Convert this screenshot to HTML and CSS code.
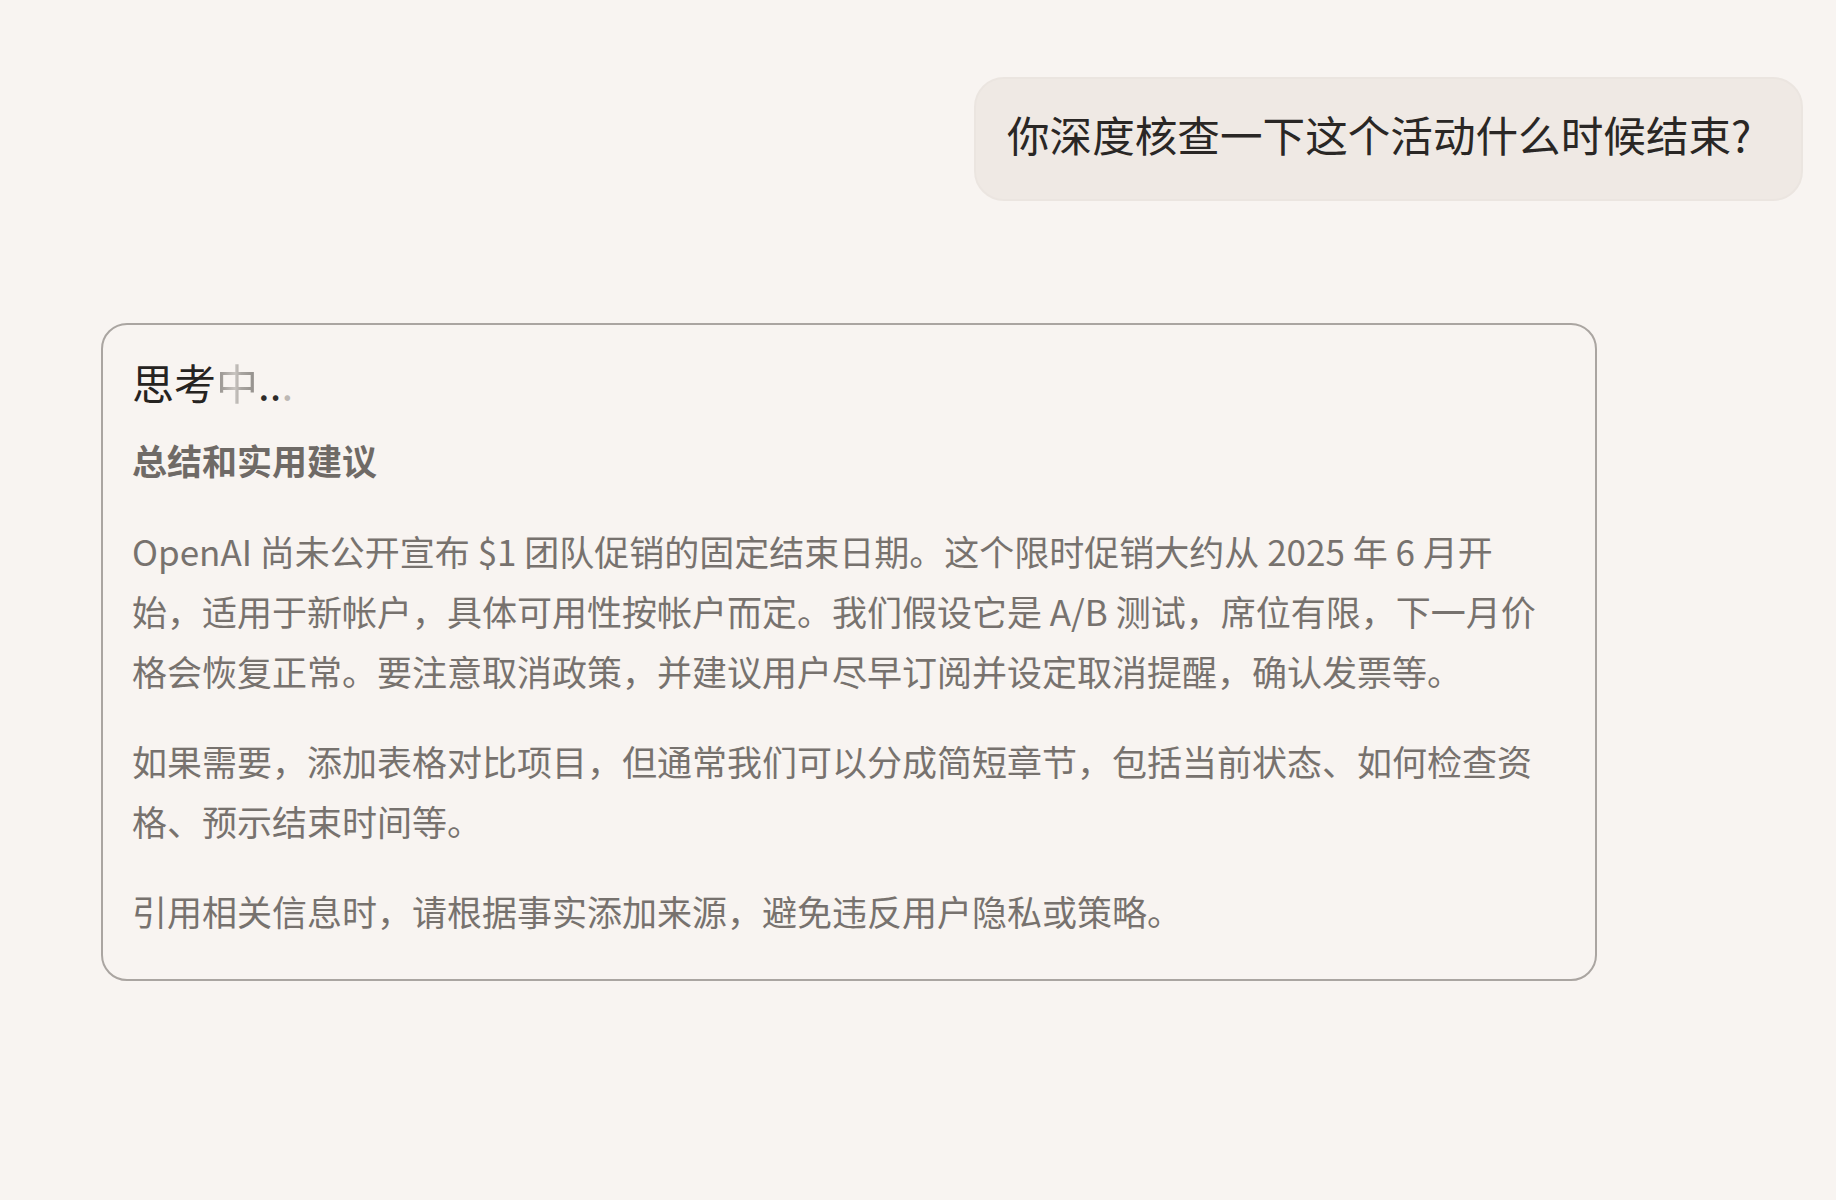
FILE: index.html
```html
<!DOCTYPE html>
<html lang="zh-CN">
<head>
<meta charset="utf-8">
<title>深度核查</title>
<link rel="stylesheet" href="styles.css">
</head>
<body>
<main class="chat">
  <div class="row-user">
    <div class="bubble">你深度核查一下这个活动什么时候结束?</div>
  </div>
  <section class="thinking">
    <div class="status">思考<span class="shimmer">中</span><span class="dot">.</span><span class="dot">.</span><span class="dot faint">.</span></div>
    <h3 class="heading">总结和实用建议</h3>
    <p class="para">OpenAI 尚未公开宣布 $1 团队促销的固定结束日期。这个限时促销大约从 2025 年 6 月开始，适用于新帐户，具体可用性按帐户而定。我们假设它是 A/B 测试，席位有限，下一月价格会恢复正常。要注意取消政策，并建议用户尽早订阅并设定取消提醒，确认发票等。</p>
    <p class="para">如果需要，添加表格对比项目，但通常我们可以分成简短章节，包括当前状态、如何检查资格、预示结束时间等。</p>
    <p class="para">引用相关信息时，请根据事实添加来源，避免违反用户隐私或策略。</p>
  </section>
</main>
</body>
</html>
```
FILE: styles.css
```css
* { box-sizing: border-box; }
html, body {
  margin: 0;
  padding: 0;
  background: #f8f4f1;
}
body {
  font-family: "Noto Sans CJK SC", "Noto Sans", sans-serif;
  width: 1836px;
  height: 1200px;
  overflow: hidden;
}
.chat {
  display: flex;
  flex-direction: column;
  padding: 77px 33px 0 101px;
}
.row-user {
  display: flex;
  justify-content: flex-end;
}
.bubble {
  width: 829px;
  height: 124px;
  display: flex;
  align-items: center;
  padding: 0 40px 12px 31px;
  background: #efe9e4;
  border: 2px solid #ebe5e0;
  border-radius: 30px;
  font-size: 42.6px;
  color: #2a2725;
  white-space: nowrap;
}
.thinking {
  margin-top: 122px;
  width: 1496px;
  border: 2px solid #aaa5a1;
  border-radius: 26px;
  padding: 28px 42px 38px 29px;
}
.status {
  font-size: 42px;
  line-height: 58px;
  color: #262321;
}
.shimmer {
  background: linear-gradient(90deg, #8e8a86 0%, #c9c5c1 45%, #a9a5a1 60%, #8f8b87 100%);
  -webkit-background-clip: text;
  background-clip: text;
  color: transparent;
}
.dot { color: #2e2b29; }
.dot.faint { color: #bdb8b4; }
.heading {
  margin: 24px 0 0;
  font-size: 35px;
  line-height: 50px;
  font-weight: 700;
  color: #6f6a66;
}
.para {
  margin: 36px 0 0;
  font-size: 35px;
  line-height: 60px;
  color: #77726e;
}
.para + .para { margin-top: 30px; }
```
